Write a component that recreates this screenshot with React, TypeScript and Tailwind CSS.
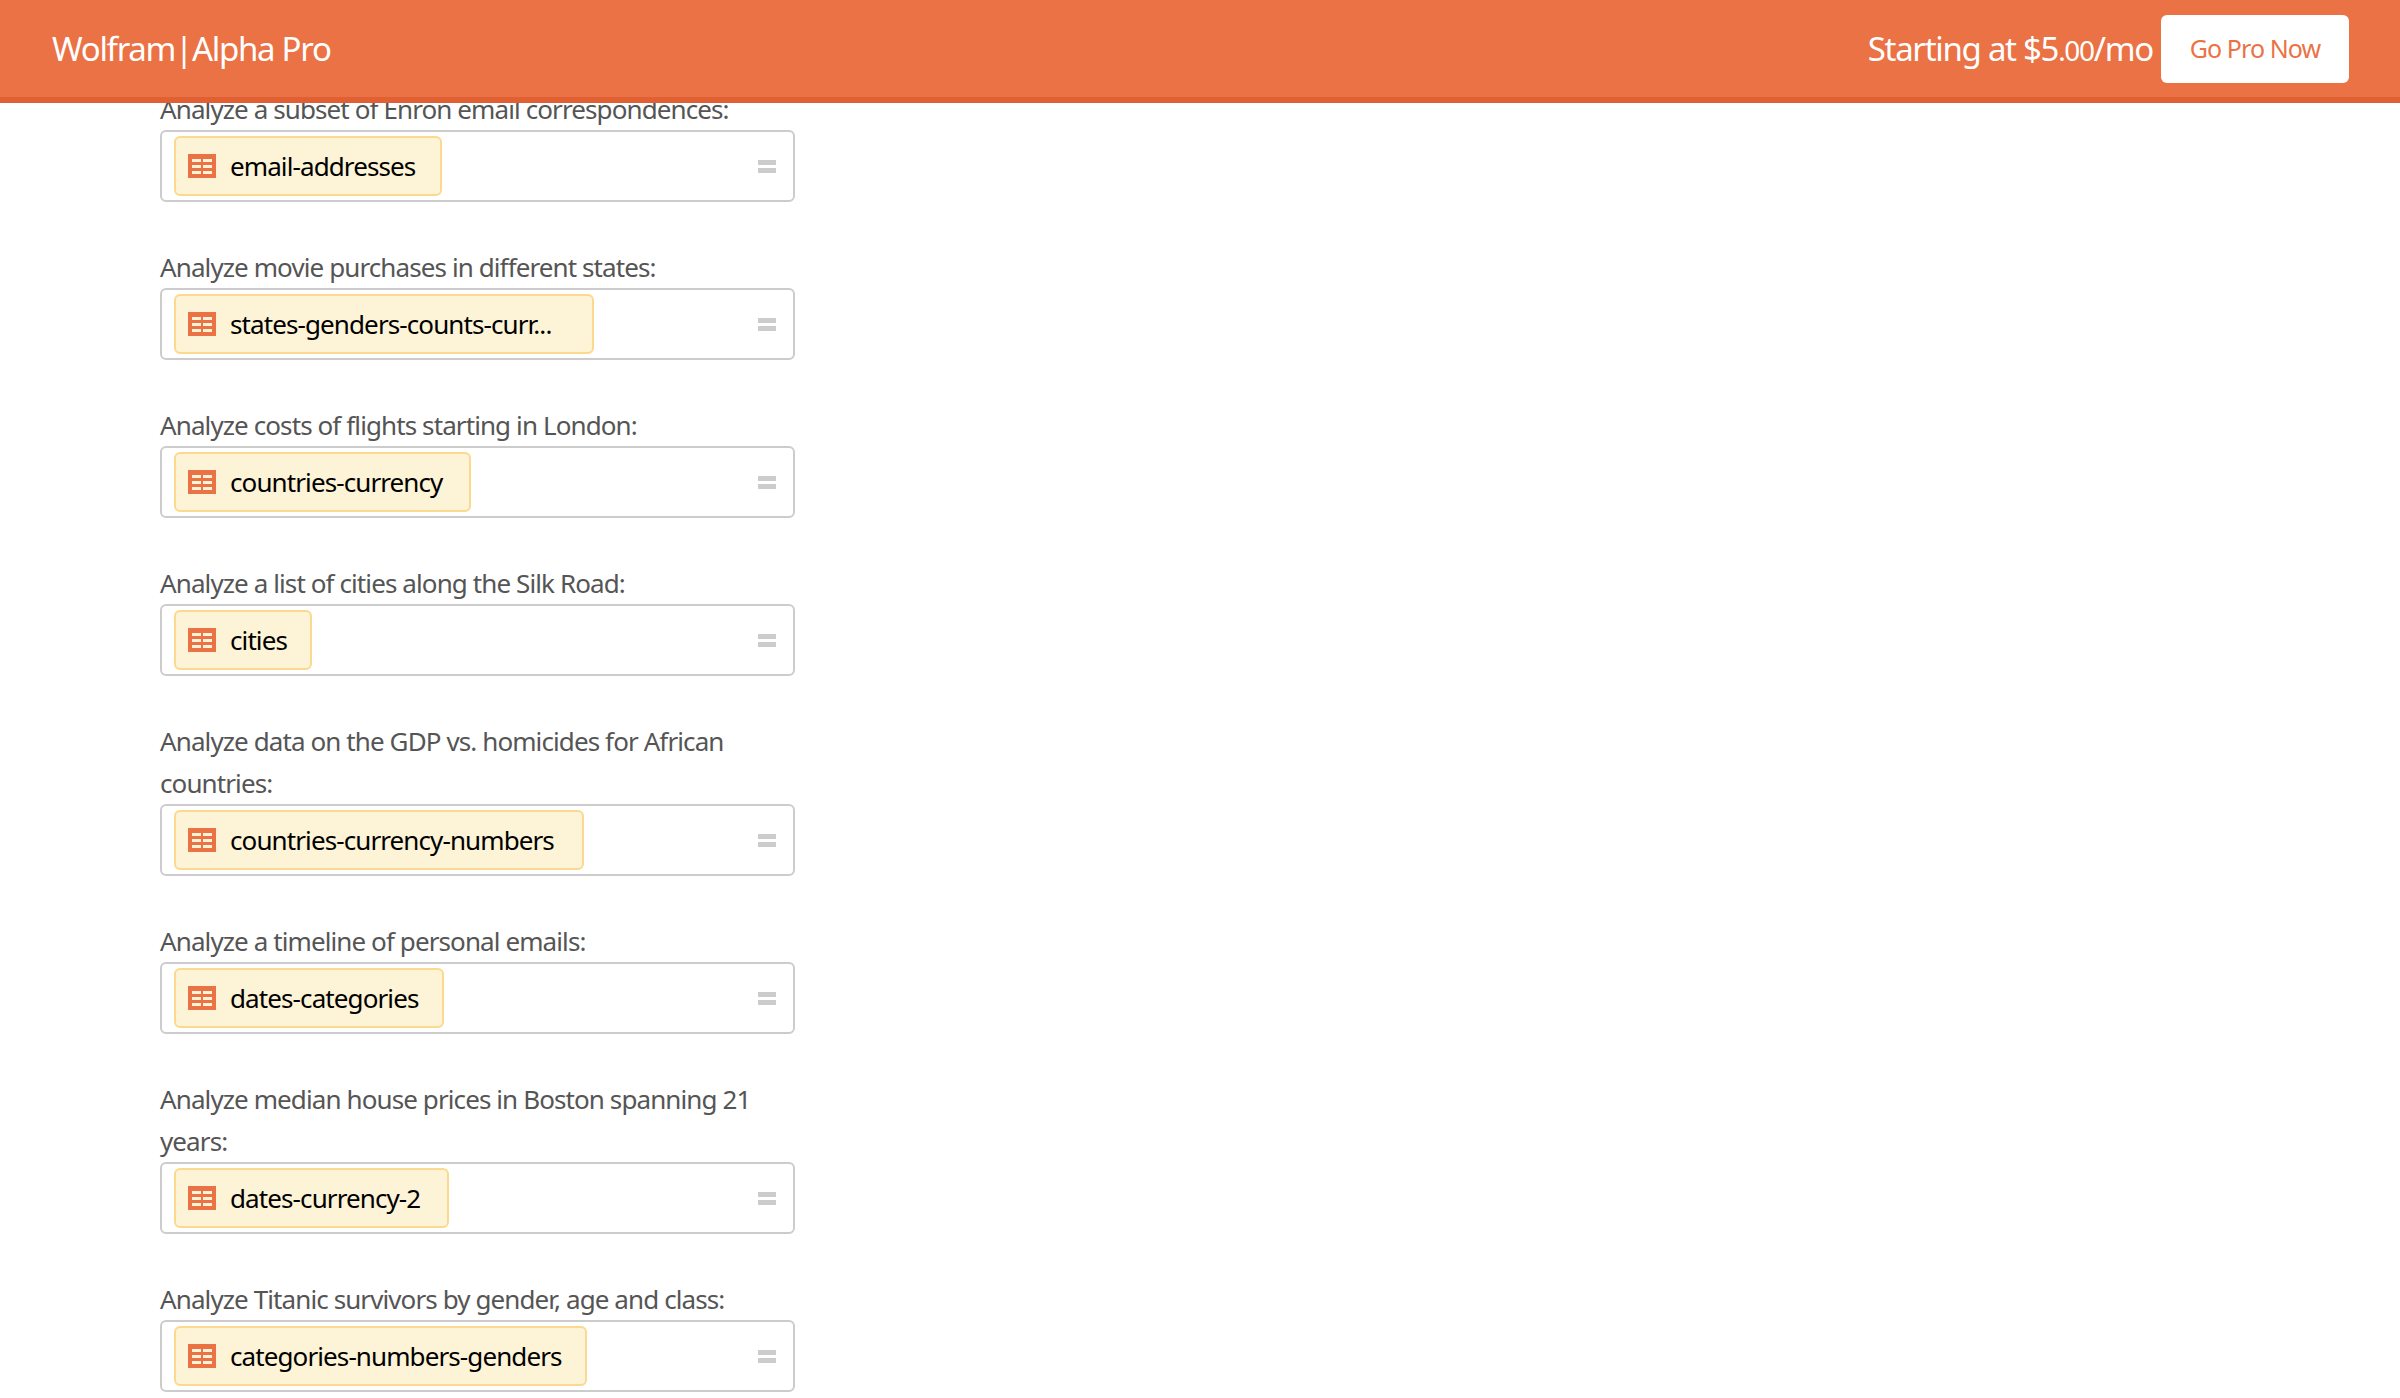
const rows: { label: string[]; chip: string; w: number }[] = [
  { label: ["Analyze a subset of Enron email correspondences:"], chip: "email-addresses", w: 268 },
  { label: ["Analyze movie purchases in different states:"], chip: "states-genders-counts-curr...", w: 420 },
  { label: ["Analyze costs of flights starting in London:"], chip: "countries-currency", w: 297 },
  { label: ["Analyze a list of cities along the Silk Road:"], chip: "cities", w: 138 },
  { label: ["Analyze data on the GDP vs. homicides for African", "countries:"], chip: "countries-currency-numbers", w: 410 },
  { label: ["Analyze a timeline of personal emails:"], chip: "dates-categories", w: 270 },
  { label: ["Analyze median house prices in Boston spanning 21", "years:"], chip: "dates-currency-2", w: 275 },
  { label: ["Analyze Titanic survivors by gender, age and class:"], chip: "categories-numbers-genders", w: 413 },
];

function TableIcon() {
  return (
    <svg width="28" height="24" viewBox="0 0 28 24" className="shrink-0">
      <rect width="28" height="24" fill="#eb7245" />
      <rect x="4" y="5" width="9" height="3" fill="#fdf3d6" />
      <rect x="15" y="5" width="9" height="3" fill="#fdf3d6" />
      <rect x="4" y="11" width="9" height="3" fill="#fdf3d6" />
      <rect x="15" y="11" width="9" height="3" fill="#fdf3d6" />
      <rect x="4" y="17" width="9" height="3" fill="#fdf3d6" />
      <rect x="15" y="17" width="9" height="3" fill="#fdf3d6" />
    </svg>
  );
}

export default function App() {
  return (
    <div className="relative h-[1398px] w-[2400px] overflow-hidden bg-white font-['Noto_Sans',sans-serif]">
      <header className="absolute left-0 right-0 top-0 z-10 flex h-[103px] items-center justify-between border-b-[6px] border-[#e06033] bg-[#eb7245] pl-[52px] pr-[51px] text-white">
        <div className="text-[33px] tracking-[-1.3px]">Wolfram|Alpha Pro</div>
        <div className="flex items-center gap-2">
          <span className="text-[33px] tracking-[-1.3px]">
            Starting at $5<span className="text-[28px]">.00</span>/mo
          </span>
          <button className="flex h-[68px] w-[188px] items-center justify-center rounded-md bg-white text-[25px] tracking-[-0.9px] text-[#eb7245]">
            Go Pro Now
          </button>
        </div>
      </header>
      <main className="w-[635px] ml-[160px] pt-[88px] flex flex-col gap-[44px]">
        {rows.map((r) => (
          <section key={r.chip}>
            {r.label.map((l) => (
              <div key={l} className="text-[26px] leading-[42px] tracking-[-0.9px] text-[#555555]">
                {l}
              </div>
            ))}
            <div className="flex h-[72px] items-center justify-between rounded-md border-2 border-[#cccccc] pl-[12px] pr-[17px]">
              <div
                className="flex h-[60px] items-center gap-[14px] rounded-md border-2 border-[#fbd98f] bg-[#fdf3d6] pl-[12px] text-[26px] tracking-[-0.9px] text-black"
                style={{ width: r.w }}
              >
                <TableIcon />
                <span className="whitespace-nowrap">{r.chip}</span>
              </div>
              <div className="flex flex-col gap-[3px]">
                <div className="h-[5px] w-[18px] bg-[#cccccc]" />
                <div className="h-[5px] w-[18px] bg-[#cccccc]" />
              </div>
            </div>
          </section>
        ))}
      </main>
    </div>
  );
}
